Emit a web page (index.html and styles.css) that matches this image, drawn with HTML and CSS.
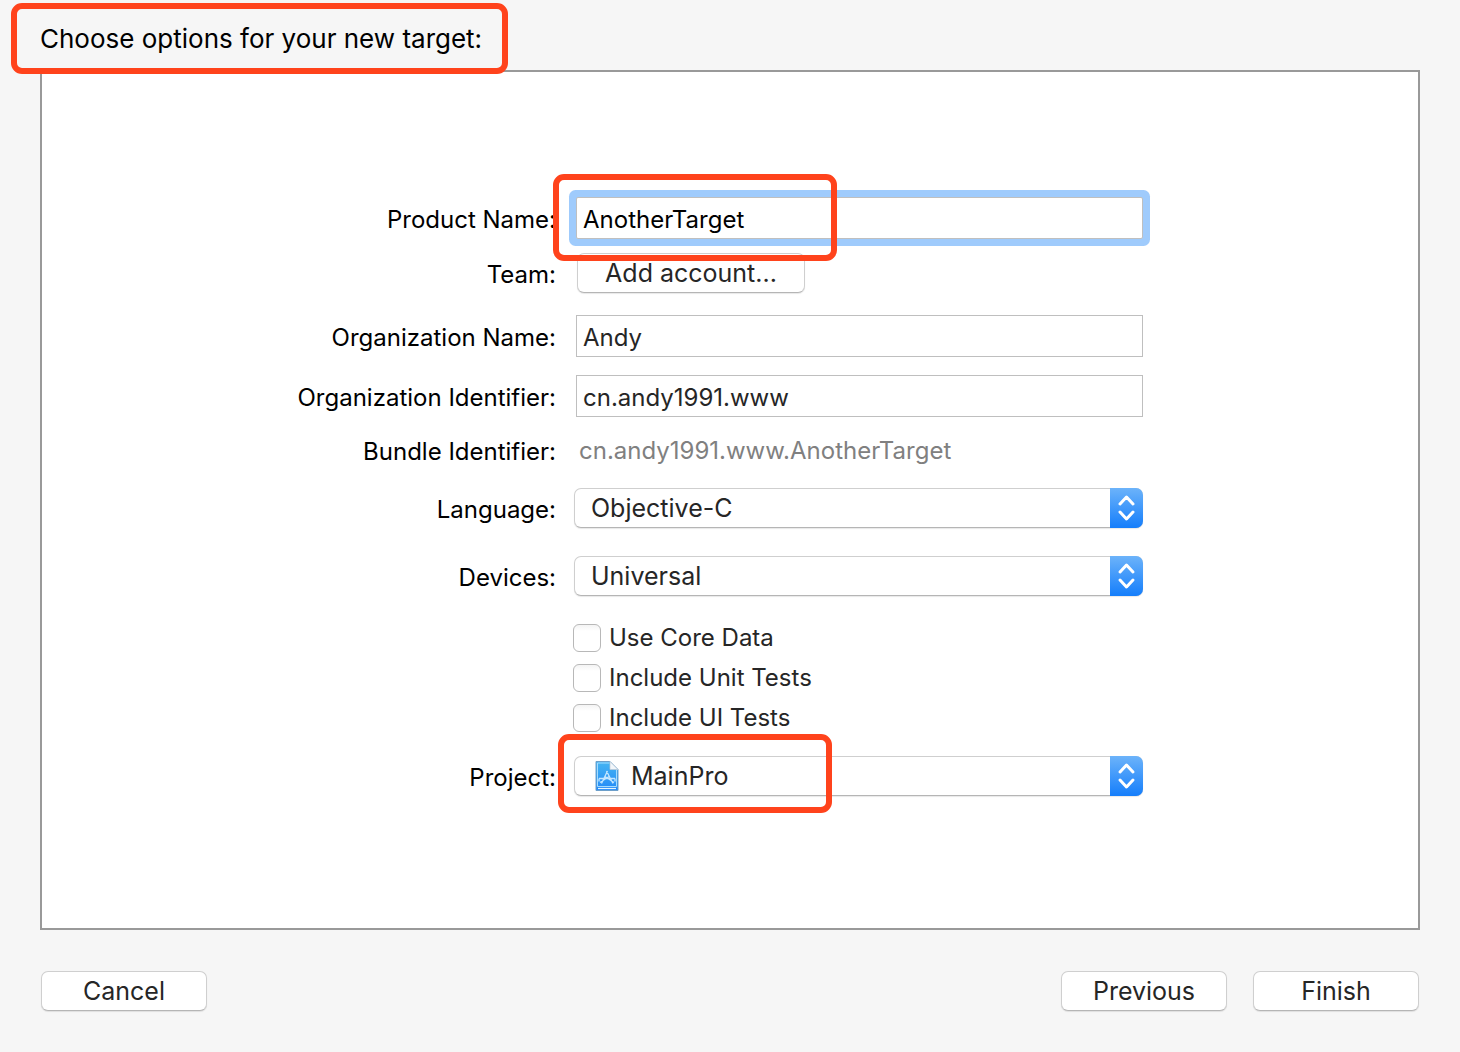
FILE: index.html
```html
<!DOCTYPE html>
<html lang="en">
<head>
<meta charset="utf-8">
<meta name="viewport" content="width=device-width, initial-scale=1">
<title>New Target</title>
<link rel="stylesheet" href="styles.css">
</head>
<body>
<form class="dialog">
  <header class="header">
    <h1 class="title">Choose options for your new target:</h1>
    <span class="mark mark-title"></span>
  </header>

  <main class="panel">
    <div class="row">
      <label class="label" for="product">Product Name:</label>
      <div class="field inset">
        <input class="text focused" id="product" type="text" value="AnotherTarget">
        <span class="mark mark-product"></span>
      </div>
    </div>
    <div class="row space-s">
      <label class="label" for="team">Team:</label>
      <div class="field inset"><button class="button team" id="team" type="button">Add account...</button></div>
    </div>
    <div class="row space-l">
      <label class="label" for="org">Organization Name:</label>
      <div class="field inset"><input class="text" id="org" type="text" value="Andy"></div>
    </div>
    <div class="row space-m">
      <label class="label" for="orgid">Organization Identifier:</label>
      <div class="field inset"><input class="text" id="orgid" type="text" value="cn.andy1991.www"></div>
    </div>
    <div class="row space-m">
      <label class="label" for="bundle">Bundle Identifier:</label>
      <div class="field inset"><output class="bundle" id="bundle">cn.andy1991.www.AnotherTarget</output></div>
    </div>
    <div class="row space-l">
      <label class="label" for="language">Language:</label>
      <div class="field">
        <select class="select" id="language"><option>Objective-C</option></select>
        <svg class="stepper" viewBox="0 0 33 40"><path d="M10 16l6.500-7 6.500 7M10 24l6.500 7 6.500-7"/></svg>
      </div>
    </div>
    <div class="row space-xl">
      <label class="label" for="devices">Devices:</label>
      <div class="field">
        <select class="select" id="devices"><option>Universal</option></select>
        <svg class="stepper" viewBox="0 0 33 40"><path d="M10 16l6.500-7 6.500 7M10 24l6.500 7 6.500-7"/></svg>
      </div>
    </div>
    <div class="row space-xl">
      <div class="checks">
        <label class="check"><input class="box" type="checkbox">Use Core Data</label>
        <label class="check"><input class="box" type="checkbox">Include Unit Tests</label>
        <label class="check"><input class="box" type="checkbox">Include UI Tests</label>
      </div>
    </div>
    <div class="row space-checks">
      <label class="label" for="project">Project:</label>
      <div class="field">
        <select class="select with-icon" id="project"><option>MainPro</option></select>
        <svg class="file" viewBox="0 0 24 32">
          <defs><linearGradient id="sheet" x1="0" y1="0" x2="0" y2="1"><stop offset="0" stop-color="#45b5f2"/><stop offset="1" stop-color="#2389f8"/></linearGradient></defs>
          <path d="M1 1.500h14l8 8v21H1z" fill="url(#sheet)" stroke="#6d9fca"/>
          <path d="M2.500 3h12M2.500 3v23.500h19V10" fill="none" stroke="#a5dcff"/>
          <path d="M15 1.500v8h8z" fill="#f2f6fa" stroke="#bdc9d4" stroke-width=".7"/>
          <path d="M3 28.500h18" stroke="#e5f5ff" stroke-width="1.200"/>
          <path d="M4 18.500h16M12.500 11L6.500 23.500M11.500 11l6.500 12.500M4 18.500v3M20 18.500v3M5 22.500l9-6M19 22.500l-9-6" fill="none" stroke="#c3e6ff" stroke-width="1.300"/>
        </svg>
        <svg class="stepper" viewBox="0 0 33 40"><path d="M10 16l6.500-7 6.500 7M10 24l6.500 7 6.500-7"/></svg>
        <span class="mark mark-project"></span>
      </div>
    </div>
  </main>

  <footer class="footer">
    <button class="button action" type="button">Cancel</button>
    <span class="spacer"></span>
    <button class="button action" type="button">Previous</button>
    <button class="button action" type="submit">Finish</button>
  </footer>
</form>
</body>
</html>
```
FILE: styles.css
```css
* {
  box-sizing: border-box;
}

body {
  margin: 0;
  background: #f6f6f6;
  color: #000;
  font: 24px/32px Inter, "Liberation Sans", sans-serif;
}

input,
select,
button {
  margin: 0;
  font: inherit;
  color: #262626;
}

.dialog {
  padding: 0 40px;
}

.header {
  position: relative;
  height: 70px;
  padding-top: 23px;
}

.title {
  margin: 0;
  font-size: 26px;
  font-weight: 400;
  line-height: 32px;
}

.panel {
  padding: 125px 275px 132px 0;
  border: 2px solid #999;
  background: #fff;
}

.row {
  display: grid;
  grid-template-columns: 514fr 569fr;
  column-gap: 18px;
  align-items: center;
}

.space-s { margin-top: 14px; }
.space-m { margin-top: 18px; }
.space-l { margin-top: 22px; }
.space-checks { margin-top: 24px; }
.space-xl { margin-top: 28px; }

.label {
  padding-top: 3px;
  line-height: 28px;
  text-align: right;
  white-space: nowrap;
}

.field {
  position: relative;
  display: flex;
}

.inset {
  padding-left: 2px;
}

.text {
  width: 100%;
  height: 42px;
  padding: 2px 6px 0;
  border: 1px solid #bfbfbf;
  border-radius: 0;
  background: #fff;
  outline: none;
}

.focused {
  color: #000;
  box-shadow: 0 0 0 7px #9fcbfc;
  border-radius: 2px;
}

.button {
  height: 40px;
  padding: 0;
  border: 1px solid #cfcfcf;
  border-bottom-color: #b5b5b5;
  border-radius: 7px;
  background: #fff;
  box-shadow: 0 1px 1px #00000018;
  font-size: 25px;
}

.team {
  width: 228px;
  margin-left: 1px;
}

.bundle {
  padding-left: 3px;
  color: #808080;
  line-height: 31px;
}

.select {
  width: 100%;
  height: 40px;
  padding: 0 40px 0 16px;
  appearance: none;
  border: 1px solid #cfcfcf;
  border-bottom-color: #b5b5b5;
  border-radius: 7px;
  background: #fff;
  box-shadow: 0 1px 1px #00000018;
  font-size: 25px;
}

.with-icon {
  padding-left: 56px;
}

.stepper {
  position: absolute;
  top: 0;
  right: 0;
  width: 33px;
  height: 40px;
  border-radius: 0 7px 7px 0;
  background: linear-gradient(#6cb3fa, #157efb);
  fill: none;
  stroke: #fff;
  stroke-width: 3;
  stroke-linecap: round;
  stroke-linejoin: round;
  pointer-events: none;
}

.file {
  position: absolute;
  top: 4px;
  left: 21px;
  width: 24px;
  height: 32px;
  pointer-events: none;
}

.checks {
  grid-column: 2;
  display: grid;
  gap: 12px;
  justify-items: start;
  margin-left: -1px;
}

.check {
  display: flex;
  align-items: center;
  gap: 8px;
  height: 28px;
  color: #262626;
  white-space: nowrap;
}

.box {
  width: 28px;
  height: 28px;
  appearance: none;
  border: 1px solid #b8b8b8;
  border-radius: 6px;
  background: linear-gradient(#f4f4f4, #fff 6px);
}

.footer {
  display: flex;
  gap: 26px;
  padding: 41px 1px;
}

.spacer {
  flex: 1;
}

.action {
  width: 166px;
}

.mark {
  position: absolute;
  border: 6px solid #ff431c;
  border-radius: 11px;
  pointer-events: none;
  z-index: 1;
}

.mark-title {
  top: 3px;
  left: -29px;
  width: 497px;
  height: 71px;
}

.mark-product {
  top: -23px;
  left: -21px;
  width: 284px;
  height: 87px;
}

.mark-project {
  top: -22px;
  left: -16px;
  width: 274px;
  height: 79px;
}
```
